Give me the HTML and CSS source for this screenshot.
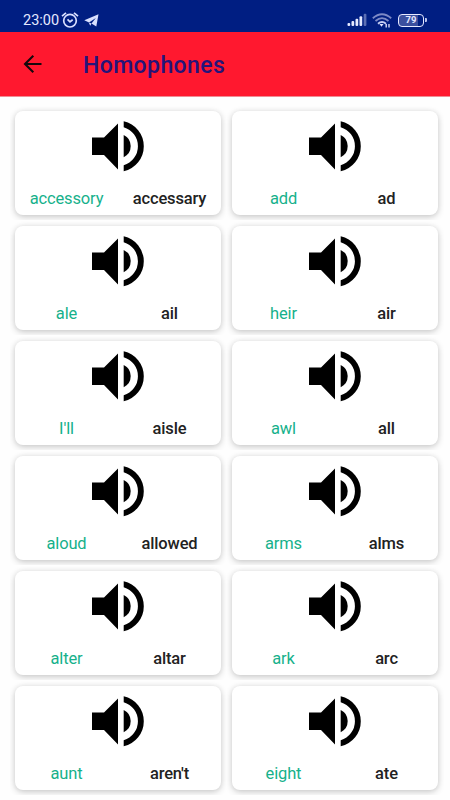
FILE: index.html
```html
<!DOCTYPE html>
<html lang="en">
  <head>
    <meta charset="utf-8">
    <title>Homophones</title>
    <link rel="stylesheet" href="styles.css">
  </head>
  <body>
    <svg width="0" height="0" class="symbols">
      <symbol id="speaker" viewBox="0 0 54 52">
        <path d="M1 17.5h12L27 3.5v46L13 35H1z" />
        <path d="M32.7 1.2A25.6 25.6 0 0 1 32.7 51.2V45.2A19.8 19.8 0 0 0 32.7 7.2z" />
        <path d="M32.7 15A12.3 12.3 0 0 1 32.7 37.2z" />
      </symbol>
    </svg>

    <div class="status-bar">
      <span class="clock">23:00</span>
      <svg class="alarm" width="18" height="16" viewBox="0 0 18 16" fill="none" stroke="#d9e0ff" stroke-width="1.7">
        <circle cx="9" cy="8.7" r="6.3" />
        <path d="M6.5 7.4l2.5 2.4 2.7-2M1 4.2L5 .8M17 4.2L13 .8" />
      </svg>
      <svg class="telegram" width="15" height="13" viewBox="0 0 15 13" fill="#d9e0ff">
        <path d="M.3 6.3L14.5.2 12.3 12.6 7.5 9.4 11.8 4 5 8.5z" />
        <path d="M4.8 8.5L7.5 9.4 6.2 11.8z" />
      </svg>
      <div class="status-right">
        <svg width="21" height="14" viewBox="0 0 21 14" fill="#e5e9ff">
          <rect x="0.5" y="10" width="2.7" height="3" rx="1" />
          <rect x="4.5" y="8" width="2.7" height="5" rx="1" />
          <rect x="8.5" y="5.7" width="2.7" height="7.3" rx="1" />
          <rect x="12.5" y="3.3" width="2.7" height="9.7" rx="1" />
          <rect x="16.7" y="0.7" width="2.7" height="12.3" rx="1" opacity="0.4" />
        </svg>
        <svg class="wifi" width="20" height="15" viewBox="0 0 20 15" fill="none" stroke="#7d8ac6" stroke-width="1.8">
          <path d="M.8 5.2Q10-2.8 19.2 5.2" />
          <path d="M3.5 8Q10 2.2 16.5 8" />
          <path d="M6 10.7Q10 7.3 14 10.7" stroke="#c6cff4" />
          <path d="M7.5 11h4l-2 2.7z" fill="#e5e9ff" stroke="none" />
          <path d="M14.2 14.5v-3.5M17 11V14.5" stroke="#e5e9ff" stroke-width="1.3" />
        </svg>
        <div class="battery"><span class="battery-text">79</span></div>
        <div class="battery-tip"></div>
      </div>
    </div>

    <div class="toolbar">
      <svg width="20" height="20" viewBox="0 0 20 20" fill="none" stroke="#16080c" stroke-width="2.1">
        <path d="M18.5 10H2.3M10.3 1.7L2 10l8.3 8.3" />
      </svg>
      <h1 class="title">Homophones</h1>
    </div>

    <div class="grid">
      <div class="cell"><div class="card">
        <svg class="speaker"><use href="#speaker" /></svg>
        <div class="words"><span class="first">accessory</span><span class="second">accessary</span></div>
      </div></div>
      <div class="cell"><div class="card">
        <svg class="speaker"><use href="#speaker" /></svg>
        <div class="words"><span class="first">add</span><span class="second">ad</span></div>
      </div></div>
      <div class="cell"><div class="card">
        <svg class="speaker"><use href="#speaker" /></svg>
        <div class="words"><span class="first">ale</span><span class="second">ail</span></div>
      </div></div>
      <div class="cell"><div class="card">
        <svg class="speaker"><use href="#speaker" /></svg>
        <div class="words"><span class="first">heir</span><span class="second">air</span></div>
      </div></div>
      <div class="cell"><div class="card">
        <svg class="speaker"><use href="#speaker" /></svg>
        <div class="words"><span class="first">I'll</span><span class="second">aisle</span></div>
      </div></div>
      <div class="cell"><div class="card">
        <svg class="speaker"><use href="#speaker" /></svg>
        <div class="words"><span class="first">awl</span><span class="second">all</span></div>
      </div></div>
      <div class="cell"><div class="card">
        <svg class="speaker"><use href="#speaker" /></svg>
        <div class="words"><span class="first">aloud</span><span class="second">allowed</span></div>
      </div></div>
      <div class="cell"><div class="card">
        <svg class="speaker"><use href="#speaker" /></svg>
        <div class="words"><span class="first">arms</span><span class="second">alms</span></div>
      </div></div>
      <div class="cell"><div class="card">
        <svg class="speaker"><use href="#speaker" /></svg>
        <div class="words"><span class="first">alter</span><span class="second">altar</span></div>
      </div></div>
      <div class="cell"><div class="card">
        <svg class="speaker"><use href="#speaker" /></svg>
        <div class="words"><span class="first">ark</span><span class="second">arc</span></div>
      </div></div>
      <div class="cell"><div class="card">
        <svg class="speaker"><use href="#speaker" /></svg>
        <div class="words"><span class="first">aunt</span><span class="second">aren't</span></div>
      </div></div>
      <div class="cell"><div class="card">
        <svg class="speaker"><use href="#speaker" /></svg>
        <div class="words"><span class="first">eight</span><span class="second">ate</span></div>
      </div></div>
    </div>
  </body>
</html>
```
FILE: styles.css
```css
* {
  box-sizing: border-box;
}

body {
  margin: 0;
  height: 800px;
  overflow: hidden;
  background-color: #fefefe;
  font-family: Roboto, sans-serif;
}

.symbols {
  display: block;
}

.status-bar {
  display: flex;
  align-items: center;
  height: 32px;
  padding: 8px 23px 0;
  background-color: #001e82;
  color: #e5e9ff;
}

.clock {
  padding-top: 1px;
  font-size: 14.5px;
  line-height: 23px;
  width: 38px;
}

.alarm {
  margin-top: -1px;
}

.telegram {
  margin-left: 5px;
}

.status-right {
  display: flex;
  align-items: center;
  margin-left: auto;
}

.wifi {
  margin-left: 4px;
}

.battery {
  display: flex;
  align-items: center;
  justify-content: center;
  width: 26px;
  height: 13px;
  margin-left: 6px;
  border: 1.5px solid #e5e9ff;
  border-radius: 4px;
  background: linear-gradient(90deg, #3a4f9f 78%, #001e82 78%);
}

.battery-text {
  font-size: 9.5px;
  font-weight: 700;
  line-height: 10px;
}

.battery-tip {
  width: 2px;
  height: 4px;
  margin-left: 1px;
  border-radius: 0 1px 1px 0;
  background-color: #b9c3ee;
}

.toolbar {
  display: flex;
  align-items: center;
  height: 64px;
  padding-left: 23px;
  background-color: #ff182f;
  box-shadow: 0 1px 0 #f08c94;
}

.title {
  margin: 2px 0 0 40px;
  color: #25147a;
  font-size: 23px;
  font-weight: 500;
  letter-spacing: 0.4px;
}

.grid {
  display: grid;
  grid-template-columns: 217px 217px;
  grid-auto-rows: 115px;
  padding: 9px 0 0 10px;
}

/* each cell clips the shadow of its own card */
.cell {
  padding: 6px 6px 6px 5px;
  overflow: hidden;
}

.card {
  display: flex;
  flex-direction: column;
  align-items: center;
  height: 103.5px;
  padding-top: 9px;
  border-radius: 8px;
  background-color: #fff;
  box-shadow: 0 2px 7px rgba(0, 0, 0, 0.2), 0 0 5px rgba(0, 0, 0, 0.05);
}

.speaker {
  width: 54px;
  height: 52px;
  flex-shrink: 0;
}

.words {
  display: flex;
  width: 100%;
  margin-top: 16px;
  font-size: 16.5px;
  line-height: 22px;
  letter-spacing: -0.15px;
}

.first,
.second {
  width: 50%;
  text-align: center;
}

.first {
  color: #16b18b;
}

.second {
  color: #222;
  font-weight: 500;
}
```
